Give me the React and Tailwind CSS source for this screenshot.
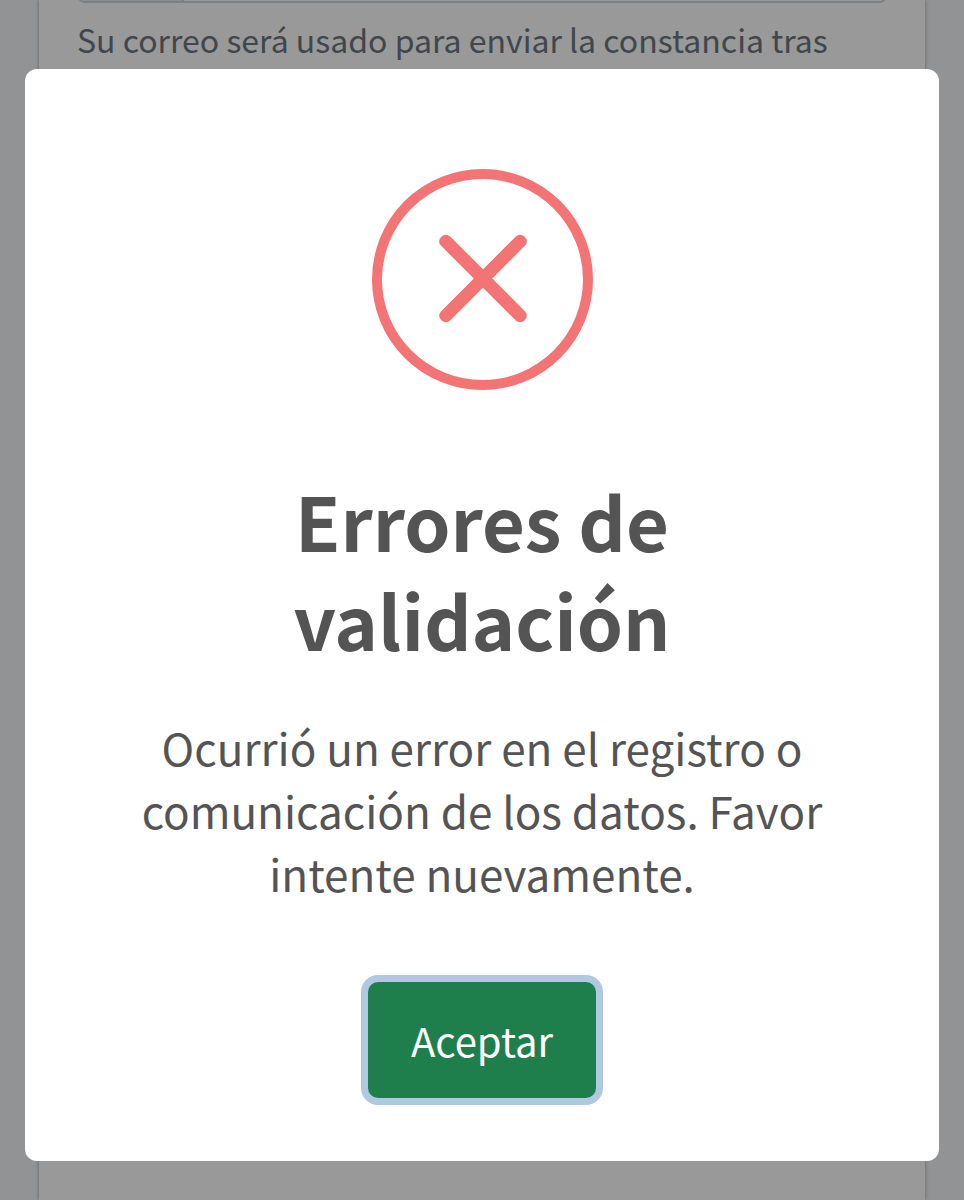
import { useState } from 'react';

const ErrorIcon = () => (
  <svg
    className="size-[221px]"
    viewBox="0 0 221 221"
    fill="none"
    stroke="#f27474"
    strokeWidth="10"
    aria-hidden="true"
  >
    <circle cx="110.5" cy="110.5" r="105.5" />
    <g fill="#f27474" stroke="none">
      <rect x="52" y="103" width="118" height="13" rx="6" transform="rotate(45 111 109.5)" />
      <rect x="52" y="103" width="118" height="13" rx="6" transform="rotate(-45 111 109.5)" />
    </g>
  </svg>
);

const RegistrationForm = () => (
  <form className="mx-[39px] min-h-screen bg-white px-[38px] shadow-[0_0_4px_rgba(0,0,0,0.35)]">
    {/* Email field, scrolled almost out of view */}
    <div className="flex h-[3px] items-end overflow-hidden">
      <div className="flex h-24 w-full shrink-0 overflow-hidden rounded-lg border-2 border-[#ced4da]">
        <span className="w-[105px] border-r-2 border-[#ced4da] bg-[#e9ecef]"></span>
        <input
          type="email"
          aria-label="Correo"
          aria-describedby="correo-ayuda"
          className="min-w-0 flex-1 bg-white px-6"
        />
      </div>
    </div>
    <p id="correo-ayuda" className="mt-3 text-[32px] leading-[48px] text-[#6c757d]">
      Su correo será usado para enviar la constancia tras
    </p>
  </form>
);

const ErrorDialog = ({ onAccept }) => (
  <div className="fixed inset-0 flex items-start justify-center overflow-y-auto bg-black/40 px-[25px] pt-[69px]">
    <div
      role="alertdialog"
      aria-modal="true"
      aria-labelledby="dialog-title"
      aria-describedby="dialog-text"
      className="flex w-full flex-col items-center rounded-xl bg-white px-24 pt-[100px] pb-[63px] text-center text-[#545454]"
    >
      <ErrorIcon />
      <h2 id="dialog-title" className="mt-20 text-[74px] leading-[99px] font-bold">
        Errores de validación
      </h2>
      <p id="dialog-text" className="mt-12 text-[44px] leading-[63px]">
        Ocurrió un error en el registro o comunicación de los datos. Favor intente nuevamente.
      </p>
      <button
        type="button"
        onClick={onAccept}
        className="mt-[77px] rounded-[10px] bg-[#1e7e4c] px-[43px] py-7 text-[40px] leading-[60px] text-white ring-[7px] ring-[#b0c8e2]"
      >
        Aceptar
      </button>
    </div>
  </div>
);

const App = () => {
  const [showError, setShowError] = useState(true);

  return (
    <div className="h-screen overflow-hidden bg-[#f4f6f9] font-['Noto_Sans_CJK_SC',sans-serif]">
      <RegistrationForm />
      {showError && <ErrorDialog onAccept={() => setShowError(false)} />}
    </div>
  );
};

export default App;
